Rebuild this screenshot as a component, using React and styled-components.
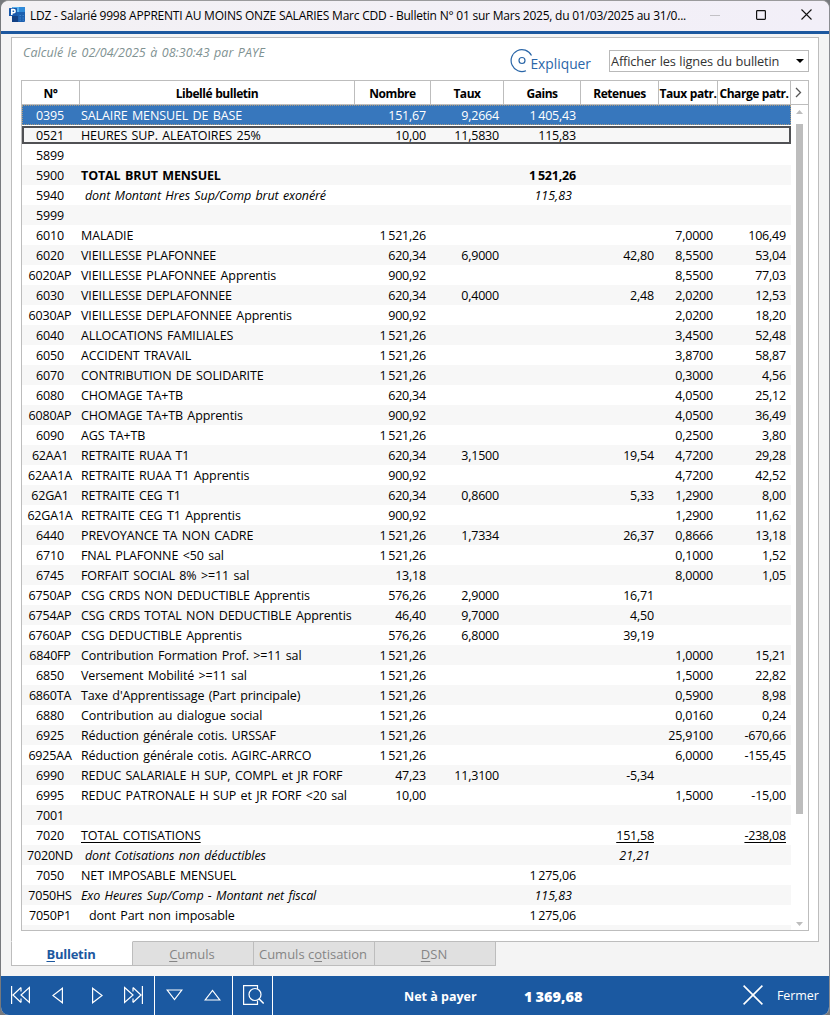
import React from "react";
import styled, { createGlobalStyle, css } from "styled-components";

const GlobalStyle = createGlobalStyle`
  * {
    box-sizing: border-box;
  }
  body {
    margin: 0;
    background: #77797d;
    font-family: "Open Sans", "Noto Sans", sans-serif;
    font-size: 12.5px;
    color: #000;
  }
`;

const COLUMNS = "58px 275px 76px 73px 77px 78px 59px 73px";

const StyledWindow = styled.div`
  width: 829px;
  height: 1015px;
  display: flex;
  flex-direction: column;
  overflow: hidden;
  margin-left: 1px;
  border-top: 1px solid #9a9a9c;
  border-right: 1px solid #8b8d92;
  border-radius: 8px;
  background: #f4f4f4;
`;

const StyledTitleBar = styled.div`
  flex: none;
  height: 33px;
  display: flex;
  align-items: center;
  padding: 0 17px 3px 8px;
  border-bottom: 3px solid #1c589f;
  background: linear-gradient(90deg, #f3f1f4, #f2eff8);
  h1 {
    flex: none;
    width: 680px;
    margin: 1px 0 0 5px;
    font-size: 12px;
    font-weight: 400;
    letter-spacing: -0.22px;
    white-space: nowrap;
  }
`;

const StyledWindowButtons = styled.div`
  flex: 1;
  display: flex;
  justify-content: space-between;
  align-items: center;
  svg {
    display: block;
  }
`;

const StyledPanel = styled.div`
  flex: none;
  width: 808px;
  height: 905px;
  margin: 3px 0 0 10px;
  padding: 0 9px;
  border: 1px solid #bdbdbd;
  background: #fff;
`;

const StyledToolbar = styled.div`
  height: 42px;
  display: flex;
  align-items: flex-start;
`;

const StyledStamp = styled.div`
  flex: 1;
  padding: 6px 0 0 2px;
  line-height: 18px;
  font-style: italic;
  letter-spacing: 0.05px;
  word-spacing: 1.1px;
  color: #7f9292;
`;

const StyledExplain = styled.div`
  display: flex;
  margin: 10px 18px 0 0;
  color: #2a66a8;
  font-size: 13.8px;
  line-height: 20px;
  span {
    margin: 6px 0 0 -3px;
  }
`;

const StyledSelect = styled.div`
  width: 200px;
  height: 22px;
  margin-top: 12px;
  padding: 0 4px 0 1px;
  display: flex;
  align-items: center;
  justify-content: space-between;
  border: 1px solid #b9b9b9;
  color: #333;
  font-size: 12.8px;
  letter-spacing: -0.15px;
  word-spacing: 0.4px;
`;

const StyledTable = styled.div`
  width: 788px;
  height: 851px;
  border: 1px solid #bdbdbd;
  display: flex;
  flex-direction: column;
`;

const StyledHeader = styled.div`
  flex: none;
  height: 24px;
  display: grid;
  grid-template-columns: ${COLUMNS} 17px;
  border-bottom: 1px solid #bdbdbd;
`;

const StyledHeaderCell = styled.div`
  display: flex;
  align-items: center;
  justify-content: center;
  border-right: ${({ $last }) => ($last ? "none" : "1px solid #bdbdbd")};
  padding: 1px ${({ $last }) => ($last ? 2 : 0)}px 0 0;
  font-size: 12px;
  font-weight: 700;
  letter-spacing: -0.45px;
  word-spacing: 0.3px;
  white-space: nowrap;
`;

const StyledTableBody = styled.div`
  flex: 1;
  min-height: 0;
  display: flex;
`;

const StyledRows = styled.div`
  width: 769px;
  overflow: hidden;
`;

const StyledRow = styled.div`
  height: 20px;
  display: grid;
  grid-template-columns: ${COLUMNS};
  line-height: 22px;
  white-space: pre;
  background: ${({ $odd }) => ($odd ? "#f7f7f7" : "#fff")};
  ${({ $kind }) =>
    $kind === "selected" &&
    css`
      color: #fff;
      background: #3777bd;
      outline: 1px dotted #a99a80;
      outline-offset: -1px;
    `}
  ${({ $kind }) =>
    $kind === "framed" &&
    css`
      height: 18px;
      margin: 1px 0;
      line-height: 20px;
      outline: 2px solid #505154;
      outline-offset: -2px;
    `}
`;

const StyledCode = styled.div`
  padding-right: 2px;
  text-align: center;
  letter-spacing: -0.2px;
`;

const StyledLabel = styled.div`
  padding-left: ${({ $indent }) => 1 + ($indent || 0)}px;
  letter-spacing: -0.11px;
  word-spacing: 1.25px;
  font-weight: ${({ $look }) => ($look === "bold" ? 700 : 400)};
  font-style: ${({ $look }) => ($look === "italic" ? "italic" : "normal")};
  text-decoration: ${({ $look }) => ($look === "underline" ? "underline" : "none")};
  text-underline-offset: 2px;
`;

const StyledNumber = styled(StyledLabel)`
  padding: 0 ${({ $look }) => ($look === "italic" ? 9 : 5)}px 0 0;
  text-align: right;
  letter-spacing: ${({ $look }) => ($look === "italic" ? 0 : -0.2)}px;
  word-spacing: -1.2px;
`;

const StyledScrollbar = styled.div`
  width: 17px;
  padding: 5px 0 4px;
  display: flex;
  flex-direction: column;
  align-items: center;
  svg {
    flex: none;
  }
`;

const StyledThumb = styled.div`
  flex: none;
  width: 7px;
  height: 690px;
  margin: 10px 0 auto;
  background: #bdbdbd;
`;

const StyledTabs = styled.div`
  flex: none;
  height: 35px;
  display: flex;
  margin: -1px 0 0 10px;
`;

const StyledTab = styled.div`
  width: ${({ $active }) => ($active ? 122 : 121)}px;
  height: 25px;
  display: flex;
  align-items: center;
  justify-content: center;
  padding: 1px 2px 0 0;
  border: 1px solid #bdbdbd;
  border-left-width: ${({ $active }) => ($active ? 1 : 0)}px;
  border-top-color: ${({ $active }) => ($active ? "#fff" : "#bdbdbd")};
  background: ${({ $active }) => ($active ? "#fff" : "#e0e0e0")};
  color: ${({ $active }) => ($active ? "#1c589f" : "#858585")};
  font-size: 13px;
  letter-spacing: ${({ $active }) => ($active ? -0.25 : 0)}px;
  font-weight: ${({ $active }) => ($active ? 700 : 400)};
  white-space: nowrap;
  u {
    text-underline-offset: 2px;
  }
`;

const StyledFooter = styled.div`
  flex: none;
  height: 39px;
  display: flex;
  align-items: stretch;
  background: #1b59a1;
  color: #fff;
`;

const StyledNavGroup = styled.div`
  width: ${({ $width }) => $width}px;
  padding: 0 0 1px ${({ $left }) => $left}px;
  display: grid;
  grid-template-columns: ${({ $steps }) => $steps};
  align-items: center;
  border-right: 1px solid #fff;
  svg {
    display: block;
  }
`;

const StyledNet = styled.div`
  width: 470px;
  padding: 2px 0 0 131px;
  display: flex;
  align-items: center;
  font-weight: 700;
  span {
    width: 120px;
  }
  strong {
    font-size: 14.5px;
    word-spacing: -0.8px;
  }
`;

const StyledClose = styled.div`
  display: flex;
  align-items: center;
  gap: 14px;
  padding-bottom: 1px;
  letter-spacing: -0.1px;
`;

const columns = [
  "N°",
  "Libellé bulletin",
  "Nombre",
  "Taux",
  "Gains",
  "Retenues",
  "Taux patr.",
  "Charge patr.",
];

// code, label, nombre, taux, gains, retenues, taux patr., charge patr., options
const lines = [
  ["0395", "SALAIRE MENSUEL DE BASE", "151,67", "9,2664", "1 405,43", "", "", "", { kind: "selected" }],
  ["0521", "HEURES SUP. ALEATOIRES 25%", "10,00", "11,5830", "115,83", "", "", "", { kind: "framed" }],
  ["5899", "", "", "", "", "", "", ""],
  ["5900", "TOTAL BRUT MENSUEL", "", "", "1 521,26", "", "", "", { look: "bold" }],
  ["5940", "dont Montant Hres Sup/Comp brut exonéré", "", "", "115,83", "", "", "", { look: "italic", indent: 4 }],
  ["5999", "", "", "", "", "", "", ""],
  ["6010", "MALADIE", "1 521,26", "", "", "", "7,0000", "106,49"],
  ["6020", "VIEILLESSE PLAFONNEE", "620,34", "6,9000", "", "42,80", "8,5500", "53,04"],
  ["6020AP", "VIEILLESSE PLAFONNEE Apprentis", "900,92", "", "", "", "8,5500", "77,03"],
  ["6030", "VIEILLESSE DEPLAFONNEE", "620,34", "0,4000", "", "2,48", "2,0200", "12,53"],
  ["6030AP", "VIEILLESSE DEPLAFONNEE Apprentis", "900,92", "", "", "", "2,0200", "18,20"],
  ["6040", "ALLOCATIONS FAMILIALES", "1 521,26", "", "", "", "3,4500", "52,48"],
  ["6050", "ACCIDENT TRAVAIL", "1 521,26", "", "", "", "3,8700", "58,87"],
  ["6070", "CONTRIBUTION DE SOLIDARITE", "1 521,26", "", "", "", "0,3000", "4,56"],
  ["6080", "CHOMAGE TA+TB", "620,34", "", "", "", "4,0500", "25,12"],
  ["6080AP", "CHOMAGE TA+TB Apprentis", "900,92", "", "", "", "4,0500", "36,49"],
  ["6090", "AGS TA+TB", "1 521,26", "", "", "", "0,2500", "3,80"],
  ["62AA1", "RETRAITE RUAA T1", "620,34", "3,1500", "", "19,54", "4,7200", "29,28"],
  ["62AA1A", "RETRAITE RUAA T1 Apprentis", "900,92", "", "", "", "4,7200", "42,52"],
  ["62GA1", "RETRAITE CEG T1", "620,34", "0,8600", "", "5,33", "1,2900", "8,00"],
  ["62GA1A", "RETRAITE CEG T1 Apprentis", "900,92", "", "", "", "1,2900", "11,62"],
  ["6440", "PREVOYANCE TA NON CADRE", "1 521,26", "1,7334", "", "26,37", "0,8666", "13,18"],
  ["6710", "FNAL PLAFONNE <50 sal", "1 521,26", "", "", "", "0,1000", "1,52"],
  ["6745", "FORFAIT SOCIAL 8% >=11 sal", "13,18", "", "", "", "8,0000", "1,05"],
  ["6750AP", "CSG CRDS NON DEDUCTIBLE Apprentis", "576,26", "2,9000", "", "16,71", "", ""],
  ["6754AP", "CSG CRDS TOTAL NON DEDUCTIBLE Apprentis", "46,40", "9,7000", "", "4,50", "", ""],
  ["6760AP", "CSG DEDUCTIBLE Apprentis", "576,26", "6,8000", "", "39,19", "", ""],
  ["6840FP", "Contribution Formation Prof. >=11 sal", "1 521,26", "", "", "", "1,0000", "15,21"],
  ["6850", "Versement Mobilité >=11 sal", "1 521,26", "", "", "", "1,5000", "22,82"],
  ["6860TA", "Taxe d'Apprentissage (Part principale)", "1 521,26", "", "", "", "0,5900", "8,98"],
  ["6880", "Contribution au dialogue social", "1 521,26", "", "", "", "0,0160", "0,24"],
  ["6925", "Réduction générale cotis. URSSAF", "1 521,26", "", "", "", "25,9100", "-670,66"],
  ["6925AA", "Réduction générale cotis. AGIRC-ARRCO", "1 521,26", "", "", "", "6,0000", "-155,45"],
  ["6990", "REDUC SALARIALE H SUP, COMPL et JR FORF", "47,23", "11,3100", "", "-5,34", "", ""],
  ["6995", "REDUC PATRONALE H SUP et JR FORF <20 sal", "10,00", "", "", "", "1,5000", "-15,00"],
  ["7001", "", "", "", "", "", "", ""],
  ["7020", "TOTAL COTISATIONS", "", "", "", "151,58", "", "-238,08", { look: "underline" }],
  ["7020ND", "dont Cotisations non déductibles", "", "", "", "21,21", "", "", { look: "italic", indent: 4 }],
  ["7050", "NET IMPOSABLE MENSUEL", "", "", "1 275,06", "", "", ""],
  ["7050HS", "Exo Heures Sup/Comp - Montant net fiscal", "", "", "115,83", "", "", "", { look: "italic" }],
  ["7050P1", "dont Part non imposable", "", "", "1 275,06", "", "", "", { indent: 8 }],
  ["", "", "", "", "", "", "", ""],
];

const Line = ({ line, odd }) => {
  const [code, label, ...rest] = line;
  const numbers = rest.slice(0, 6);
  const { kind, look, indent } = rest[6] || {};
  return (
    <StyledRow $odd={odd} $kind={kind}>
      <StyledCode>{code}</StyledCode>
      <StyledLabel $look={look} $indent={indent}>
        {label}
      </StyledLabel>
      {numbers.map((value, i) => (
        <StyledNumber key={i} $look={look}>
          {value}
        </StyledNumber>
      ))}
    </StyledRow>
  );
};

const Icon = ({ width, height, children, stroke = "#fff", strokeWidth = 1.2 }) => (
  <svg width={width} height={height} fill="none" stroke={stroke} strokeWidth={strokeWidth}>
    {children}
  </svg>
);

const AppLogo = () => (
  <svg width="16" height="15" viewBox="0 0 16 15">
    <rect x="3" y="0" width="13" height="15" rx="1" fill="#1c5fb0" />
    <path d="M3 1a1 1 0 0 1 1-1h6v5H3z" fill="#58b1ee" />
    <path d="M10 0h5a1 1 0 0 1 1 1v4h-6z" fill="#2f8ada" />
    <rect x="3" y="9" width="6" height="6" fill="#123f83" />
    <path d="M10.5 8.5h1.5M13.5 8.5h1.5M10.5 11h1.5M13.5 11h1.5M10.5 13.2h1.5M13.5 13.2h1.5" stroke="#3f83cb" />
    <rect x="0" y="1" width="8" height="8" rx="0.5" fill="#1858ab" />
    <path d="M2.8 8V2.6h1.7a1.5 1.5 0 0 1 0 3.2H2.8" fill="none" stroke="#fff" strokeWidth="1.6" />
  </svg>
);

export default function App() {
  return (
    <>
      <GlobalStyle />
      <StyledWindow>
        <StyledTitleBar>
          <AppLogo />
          <h1>
            LDZ - Salarié 9998 APPRENTI AU MOINS ONZE SALARIES Marc CDD - Bulletin N° 01 sur Mars 2025, du
            01/03/2025 au 31/0...
          </h1>
          <StyledWindowButtons>
            <Icon width={10} height={10} stroke="#c3c1c6" strokeWidth={1}>
              <path d="M0 5.5h10" />
            </Icon>
            <Icon width={10} height={10} stroke="#111">
              <rect x="0.6" y="0.6" width="8.8" height="8.8" rx="0.8" />
            </Icon>
            <Icon width={11} height={11} stroke="#111" strokeWidth={1.1}>
              <path d="M0.5 0.5l10 10M10.5 0.5l-10 10" />
            </Icon>
          </StyledWindowButtons>
        </StyledTitleBar>

        <StyledPanel>
          <StyledToolbar>
            <StyledStamp>Calculé le 02/04/2025 à 08:30:43 par PAYE</StyledStamp>
            <StyledExplain>
              <Icon width={23} height={25} stroke="#2a66a8">
                <path d="M21.5 7.5A10.8 11 0 1 0 16 22.8" />
                <circle cx="12" cy="12.5" r="3" />
              </Icon>
              <span>Expliquer</span>
            </StyledExplain>
            <StyledSelect>
              Afficher les lignes du bulletin
              <svg width="8" height="4">
                <path d="M0 0h8L4 4z" fill="#000" />
              </svg>
            </StyledSelect>
          </StyledToolbar>

          <StyledTable>
            <StyledHeader>
              {columns.map((title) => (
                <StyledHeaderCell key={title}>{title}</StyledHeaderCell>
              ))}
              <StyledHeaderCell $last>
                <Icon width={7} height={12} stroke="#555" strokeWidth={1.3}>
                  <path d="M1 1l4.500 4.500L1 10" />
                </Icon>
              </StyledHeaderCell>
            </StyledHeader>
            <StyledTableBody>
              <StyledRows>
                {lines.map((line, i) => (
                  <Line key={line[0]} line={line} odd={i % 2 === 1} />
                ))}
              </StyledRows>
              <StyledScrollbar>
                <svg width="7" height="4">
                  <path d="M0 4h7L3.5 0z" fill="#bdbdbd" />
                </svg>
                <StyledThumb />
                <svg width="7" height="4">
                  <path d="M0 0h7L3.5 4z" fill="#bdbdbd" />
                </svg>
              </StyledScrollbar>
            </StyledTableBody>
          </StyledTable>
        </StyledPanel>

        <StyledTabs>
          <StyledTab $active>
            <span>
              <u>B</u>ulletin
            </span>
          </StyledTab>
          <StyledTab>
            <span>
              <u>C</u>umuls
            </span>
          </StyledTab>
          <StyledTab>
            <span>
              Cumuls c<u>o</u>tisation
            </span>
          </StyledTab>
          <StyledTab>
            <span>
              <u>D</u>SN
            </span>
          </StyledTab>
        </StyledTabs>

        <StyledFooter>
          <StyledNavGroup $width={154} $left={10} $steps="41px 40px 32px 19px">
            <Icon width={19} height={18}>
              <path d="M0.6 0v18M10 1.500L2 9l8 7.500M18.400 1.500L10 9l8.400 7.500zM10 1.500v4M10 12.500v4" />
            </Icon>
            <Icon width={11} height={17}>
              <path d="M10.400 1.200v14.600L0.900 8.500z" />
            </Icon>
            <Icon width={11} height={17}>
              <path d="M0.600 1.200v14.600l9.500-7.300z" />
            </Icon>
            <Icon width={19} height={18}>
              <path d="M18.400 0v18M9 1.500L17 9l-8 7.500M0.600 1.500L9 9l-8.400 7.500zM9 1.500v4M9 12.500v4" />
            </Icon>
          </StyledNavGroup>
          <StyledNavGroup $width={78} $left={11} $steps="38px 17px">
            <Icon width={17} height={12}>
              <path d="M1.2 1h14.600L8.500 10.500z" />
            </Icon>
            <Icon width={17} height={12}>
              <path d="M1.200 11h14.600L8.500 1.500z" />
            </Icon>
          </StyledNavGroup>
          <StyledNavGroup $width={40} $left={10} $steps="21px">
            <Icon width={21} height={20}>
              <path d="M14.500 4V0.600H0.600v18.800h13.900v-3.500" />
              <circle cx="12" cy="9.500" r="6" />
              <path d="M16.200 14l4.500 4.500" strokeWidth="1.600" />
            </Icon>
          </StyledNavGroup>
          <StyledNet>
            <span>Net à payer</span>
            <strong>1 369,68</strong>
          </StyledNet>
          <StyledClose>
            <Icon width={20} height={20} strokeWidth={1.6}>
              <path d="M0.600 0.600l18.800 18.800M19.400 0.600L0.600 19.400" />
            </Icon>
            Fermer
          </StyledClose>
        </StyledFooter>
      </StyledWindow>
    </>
  );
}
